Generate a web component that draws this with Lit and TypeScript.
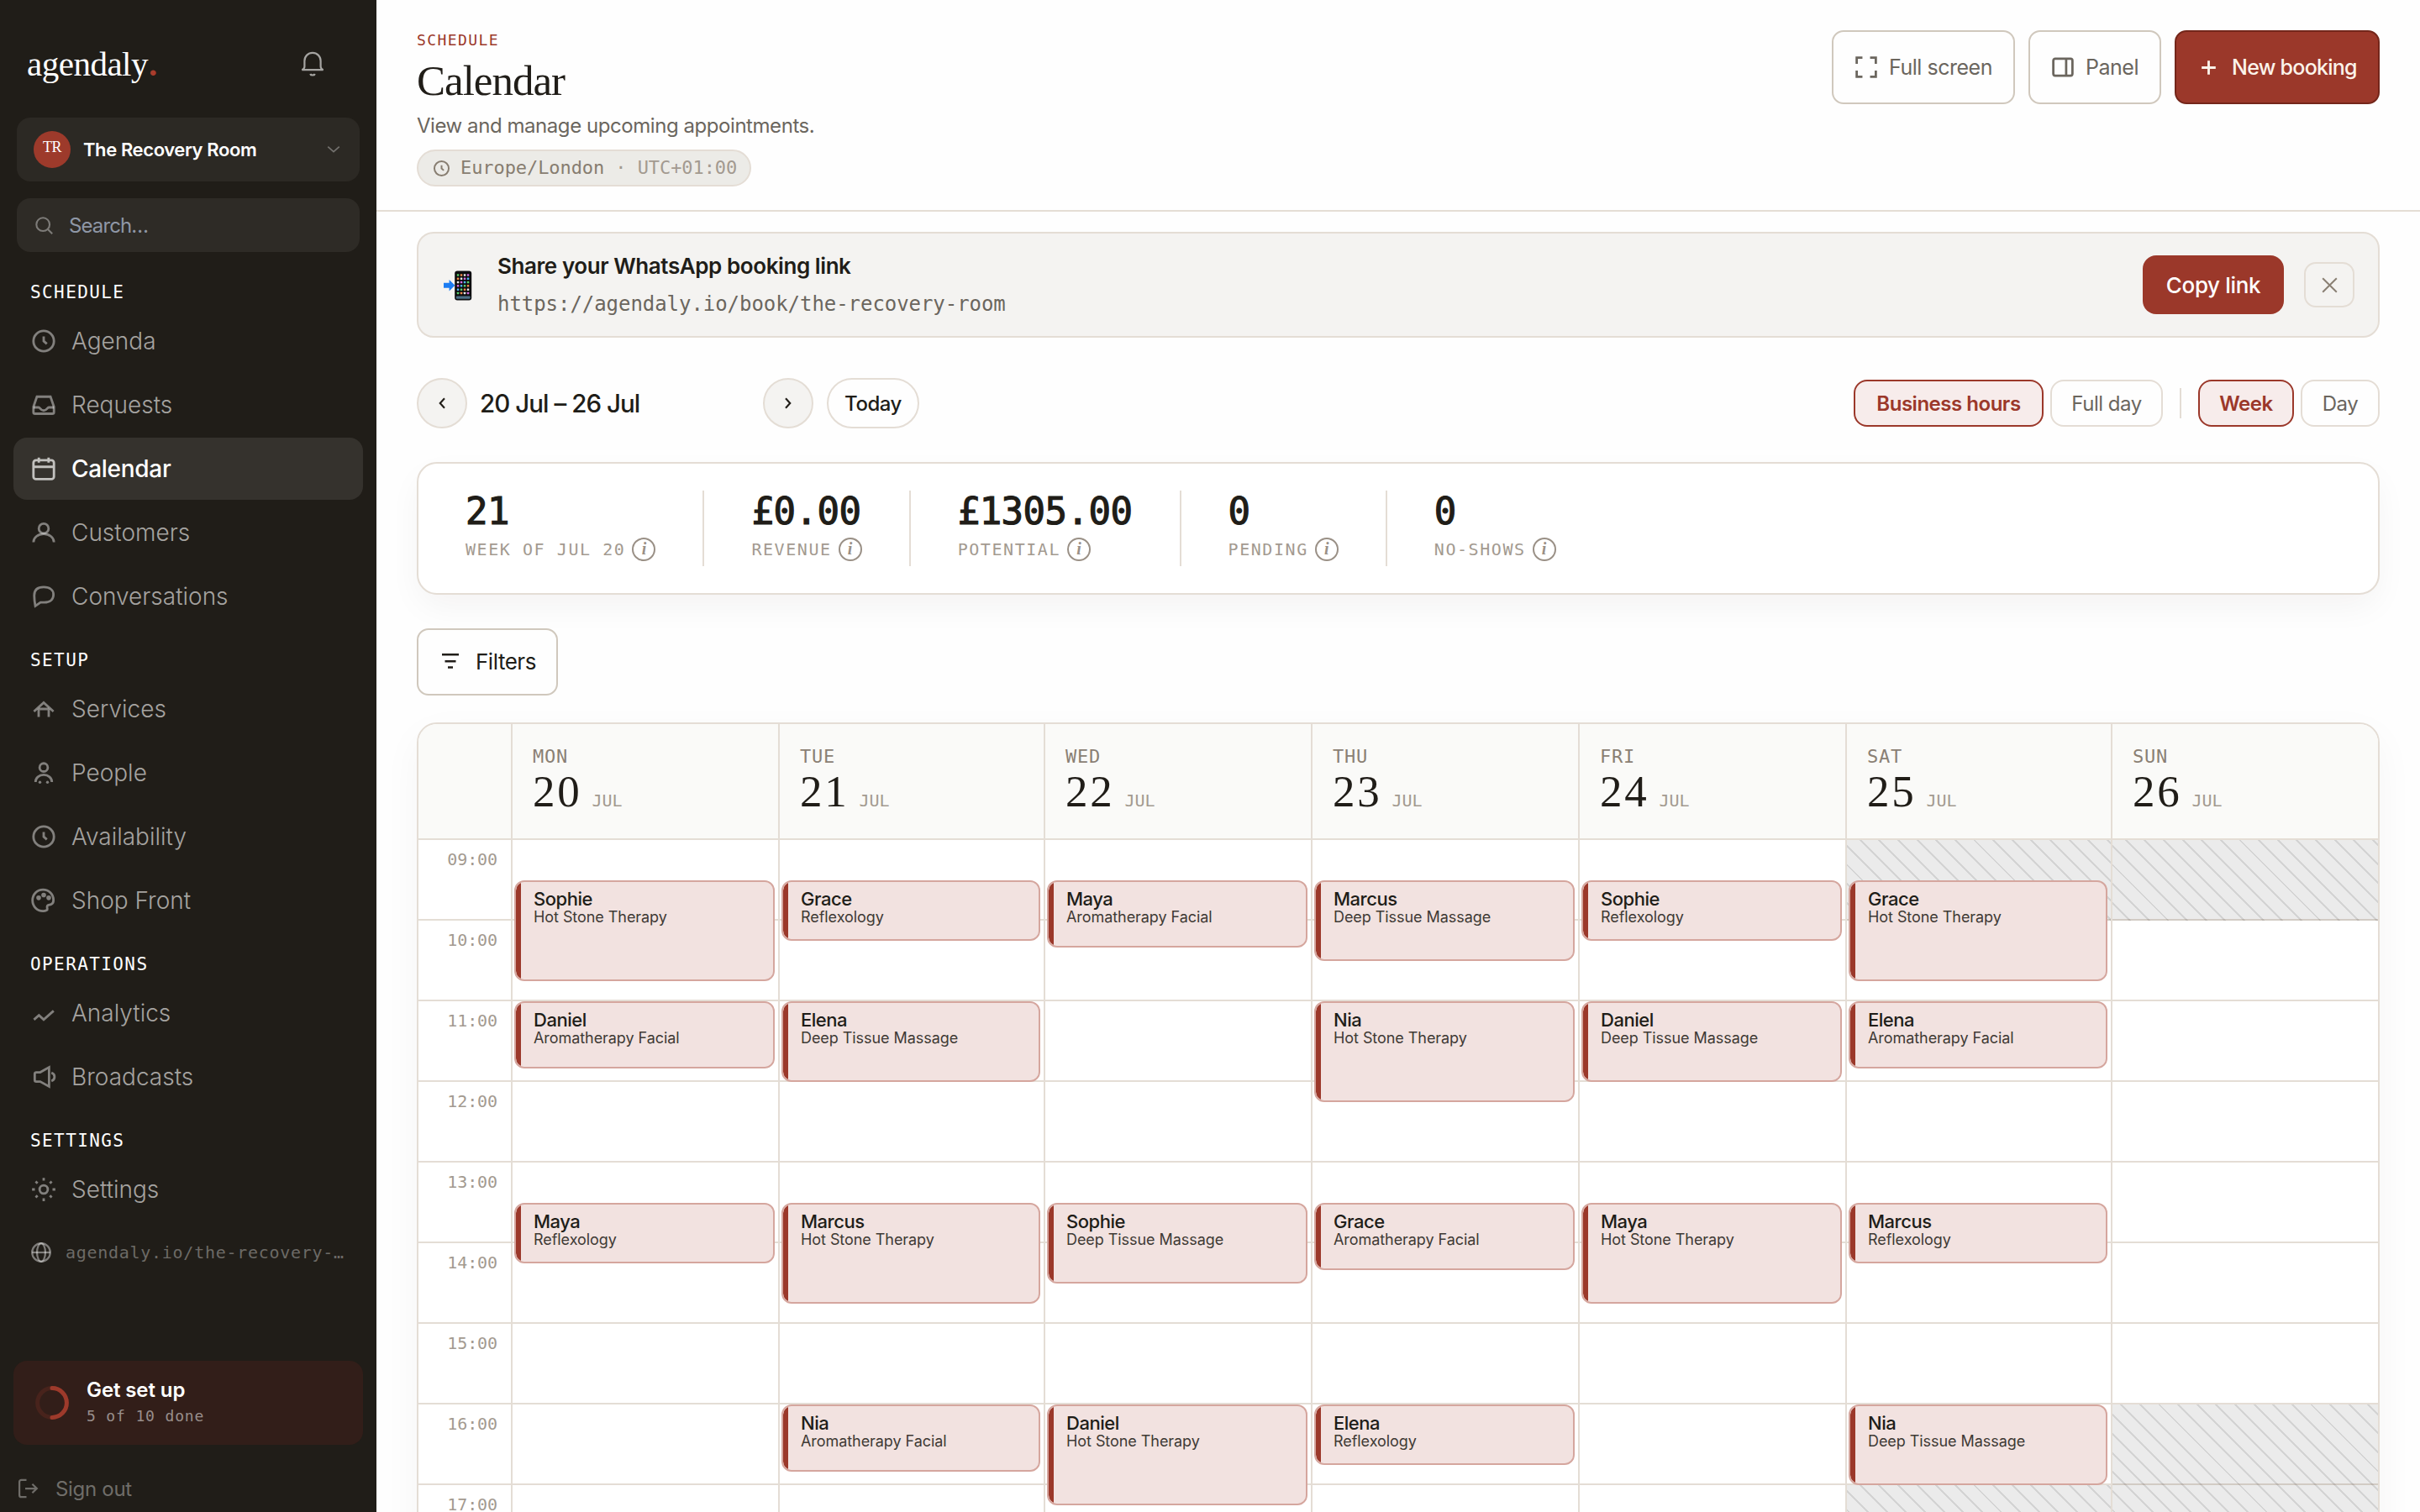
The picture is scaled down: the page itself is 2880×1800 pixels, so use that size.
import { LitElement, css, html, svg } from "lit";
import { customElement, property, state } from "lit/decorators.js";
import { classMap } from "lit/directives/class-map.js";
import { styleMap } from "lit/directives/style-map.js";

const ICONS: Record<string, unknown> = {
  clock: svg`<circle cx="8" cy="8" r="6.5" /><path d="M8 5.1V8l2 1.8" />`,
  inbox: svg`
    <path d="M3.7 2.8h8.6l2.2 6.4v3.4a1 1 0 0 1-1 1h-11a1 1 0 0 1-1-1V9.2z" />
    <path d="M1.5 9.6h3.3c.9 0 1.3 2 3.2 2s2.3-2 3.2-2h3.3" />`,
  calendar: svg`
    <rect x="1.5" y="2.6" width="13" height="12" rx="1.6" />
    <path d="M1.5 6.8h13M4.9 0.9v3.2M11.1 0.9v3.2" />`,
  user: svg`
    <circle cx="8" cy="5.4" r="3.1" />
    <path d="M1.5 14.1c0-2.9 2.9-5.2 6.5-5.2s6.5 2.3 6.5 5.2" />`,
  chat: svg`<path
    d="M2 7.4C2 4 4 2.1 8 2.1s6.2 2 6.2 4.8c0 3-2.2 4.9-5.8 4.9H6l-3.3 2.3c-.4-2.2-.7-4.4-.7-6.7z"
  />`,
  services: svg`
    <path d="M1.8 9.6 8 4l6.2 5.6" />
    <path d="M4.8 13V7.8M11.2 13V7.8M4.8 8h6.4" />`,
  people: svg`
    <circle cx="8" cy="4.6" r="2.6" />
    <path d="M2.8 13.8c0-2.6 2.3-4.5 5.2-4.5s5.2 1.9 5.2 4.5" />
    <circle class="dot" cx="5.6" cy="14" r="0.9" />
    <circle class="dot" cx="10.4" cy="14" r="0.9" />`,
  palette: svg`
    <path
      d="M7.6 1.1C3.8 1.1.9 4 .9 7.9s2.9 6.8 6.7 6.8c1.7 0 2.9-.5 2.7-1.5-.2-.8-.4-1.2.1-1.9.6-.8 1.5-.4 2.4-.9 1-.5 1.4-1.5 1.4-2.7 0-3.7-2.9-6.6-6.6-6.6z"
    />
    <circle class="dot" cx="4.8" cy="6.3" r="1.5" />
    <circle class="dot" cx="8" cy="4.5" r="1.5" />
    <circle class="dot" cx="11.2" cy="6.3" r="1.5" />`,
  trend: svg`<path d="M1.8 12.2 5 9.4l3 2.8 6.3-5.6" />`,
  speaker: svg`
    <path
      d="M11.4 1.9v12.2L5.8 11H3.3a1 1 0 0 1-1-1V6.1a1 1 0 0 1 1-1h2.5z"
    />
    <path d="M12.9 5.4a2.7 2.7 0 0 1 0 5.2" />`,
  gear: svg`
    <circle cx="8" cy="8" r="2.6" />
    <path
      d="M8 .6v1.8M8 13.6v1.8M.6 8h1.8M13.6 8h1.8M2.9 2.9l1.2 1.2M11.9 11.9l1.2 1.2M2.9 13.1l1.2-1.2M11.9 4.1l1.2-1.2"
    />`,
  globe: svg`
    <circle cx="8" cy="8" r="7.2" />
    <path d="M.8 8h14.4" />
    <ellipse cx="8" cy="8" rx="3.3" ry="7.2" />`,
  search: svg`<circle cx="7" cy="7" r="6" /><path d="m11.4 11.4 4 4" />`,
  bell: svg`
    <path d="M3.2 9.6V6.2a4.8 4.8 0 0 1 9.6 0v3.4c0 .9.7 1.6 1.5 2H1.7c.8-.4 1.5-1.1 1.5-2z" />
    <path d="M6.6 14c.4 1 2.4 1 2.8 0" />`,
  chevronDown: svg`<path d="m2 5 6 5.4L14 5" />`,
  chevronLeft: svg`<path d="M10.4 3.4 6.2 8l4.2 4.6" />`,
  chevronRight: svg`<path d="M5.6 3.4 9.8 8l-4.2 4.6" />`,
  logout: svg`
    <path d="M7 1.2H2.9a1.5 1.5 0 0 0-1.5 1.5v10.6a1.5 1.5 0 0 0 1.5 1.5H7" />
    <path d="M6 8h9M11.6 4.5 15.2 8l-3.6 3.5" />`,
  fullscreen: svg`<path
    d="M1 5.6V1h4.2M10.8 1H15v4.6M15 10.4V15h-4.2M5.2 15H1v-4.6"
  />`,
  panel: svg`
    <rect x="1" y="1.8" width="14" height="12.4" rx="1.4" />
    <path d="M10.4 1.8v12.4" />`,
  plus: svg`<path d="M8 1v14M1 8h14" />`,
  close: svg`<path d="m1 1 14 14M15 1 1 15" />`,
  filter: svg`<path d="M0 1.8h16M2.8 8.2h10.4M5.6 14h4.8" />`,
};

@customElement("ui-icon")
export class UiIcon extends LitElement {
  @property({ type: String })
  name: string = "";

  render() {
    return html`<svg viewBox="0 0 16 16">${ICONS[this.name]}</svg>`;
  }

  static styles = css`
    :host {
      display: block;
      flex: none;
      width: 30px;
      height: 30px;
    }
    svg {
      display: block;
      width: 100%;
      height: 100%;
      overflow: visible;
      fill: none;
      stroke: currentColor;
      stroke-width: var(--stroke, 1.5);
    }
    .dot {
      fill: currentColor;
      stroke: none;
    }
  `;
}

const SECTIONS = [
  {
    title: "Schedule",
    items: [
      ["clock", "Agenda"],
      ["inbox", "Requests"],
      ["calendar", "Calendar"],
      ["user", "Customers"],
      ["chat", "Conversations"],
    ],
  },
  {
    title: "Setup",
    items: [
      ["services", "Services"],
      ["people", "People"],
      ["clock", "Availability"],
      ["palette", "Shop Front"],
    ],
  },
  {
    title: "Operations",
    items: [
      ["trend", "Analytics"],
      ["speaker", "Broadcasts"],
    ],
  },
  { title: "Settings", items: [["gear", "Settings"]] },
];

@customElement("side-bar")
export class SideBar extends LitElement {
  @property({ type: String })
  active: string = "Calendar";

  render() {
    return html`
      <div class="brand">
        <span class="logo">agendaly<i>.</i></span>
        <ui-icon class="bell" name="bell"></ui-icon>
      </div>
      <div class="org">
        <span class="avatar">TR</span>
        <span class="org-name">The Recovery Room</span>
        <ui-icon class="chevron" name="chevronDown"></ui-icon>
      </div>
      <div class="search">
        <ui-icon class="search-icon" name="search"></ui-icon>
        <span>Search…</span>
      </div>
      <nav>
        ${SECTIONS.map(
          (s) => html`
            <div class="section">${s.title}</div>
            ${s.items.map(
              ([icon, label]) => html`
                <a class=${classMap({ item: true, on: label === this.active })}>
                  <ui-icon name=${icon}></ui-icon>
                  <span>${label}</span>
                </a>
              `
            )}
          `
        )}
        <div class="site">
          <ui-icon class="globe" name="globe"></ui-icon>
          <span>agendaly.io/the-recovery-…</span>
        </div>
      </nav>
      <div class="setup">
        <svg class="ring" viewBox="0 0 40 40">
          <circle class="track" cx="20" cy="20" r="17.4" />
          <path class="done" d="M20 2.6a17.4 17.4 0 0 1 0 34.8" />
        </svg>
        <div>
          <div class="setup-title">Get set up</div>
          <div class="setup-sub">5 of 10 done</div>
        </div>
      </div>
      <div class="signout">
        <ui-icon class="logout" name="logout"></ui-icon>
        <span>Sign out</span>
      </div>
    `;
  }

  static styles = css`
    :host {
      box-sizing: border-box;
      display: flex;
      flex-direction: column;
      flex: none;
      width: 448px;
      height: 1800px;
      padding: 44px 16px 0;
      background: #201d18;
      color: #fff;
    }
    .brand {
      display: flex;
      align-items: center;
      justify-content: space-between;
      height: 64px;
      margin-bottom: 32px;
      padding: 0 44px 0 16px;
    }
    .logo {
      font: 41px/60px "Liberation Serif", serif;
      letter-spacing: -0.5px;
    }
    .logo i {
      margin-left: 1px;
      color: #a83c2c;
      font-style: normal;
      font-weight: 700;
    }
    .bell {
      --stroke: 1.1;
      width: 32px;
      height: 32px;
      color: #a5a4a1;
    }
    .org {
      display: flex;
      align-items: center;
      height: 76px;
      margin: 0 4px 20px;
      padding: 0 22px 0 20px;
      box-sizing: border-box;
      border-radius: 16px;
      background: #2c2924;
    }
    .avatar {
      width: 44px;
      height: 44px;
      border-radius: 50%;
      background: #9d3a2b;
      font: 18px/38px "Liberation Serif", serif;
      text-align: center;
    }
    .org-name {
      flex: 1;
      margin-left: 15px;
      font-size: 22px;
      font-weight: 600;
      letter-spacing: -0.4px;
    }
    .chevron {
      width: 18px;
      height: 18px;
      color: #73716e;
    }
    .search {
      display: flex;
      align-items: center;
      height: 64px;
      margin: 0 4px 9px;
      padding-left: 22px;
      box-sizing: border-box;
      border-radius: 16px;
      background: #2e2b26;
      color: #8f97a6;
      font-size: 24px;
      letter-spacing: -0.9px;
    }
    .search-icon {
      --stroke: 1.6;
      width: 21px;
      height: 21px;
      margin-right: 19px;
      color: #7d7b78;
    }
    .section {
      height: 60px;
      box-sizing: border-box;
      padding: 29px 0 0 20px;
      font: 21px/21px "DejaVu Sans Mono", monospace;
      letter-spacing: 1.4px;
      text-transform: uppercase;
    }
    .item {
      display: flex;
      align-items: center;
      gap: 18px;
      height: 74px;
      padding-left: 21px;
      border-radius: 16px;
      color: #a5a3a0;
      font-size: 28px;
      font-weight: 300;
      letter-spacing: 0;
    }
    .item + .item {
      margin-top: 2px;
    }
    .item ui-icon {
      color: rgba(255, 255, 255, 0.44);
    }
    .item.on {
      background: #35322d;
      color: #fff;
      font-weight: 500;
      letter-spacing: -0.3px;
    }
    .item.on ui-icon {
      color: #c2c1be;
    }
    .site {
      display: flex;
      align-items: center;
      gap: 17px;
      height: 76px;
      padding-left: 21px;
      color: #6c6a66;
      font: 20px/24px "DejaVu Sans Mono", monospace;
      letter-spacing: 0.72px;
      white-space: nowrap;
    }
    .globe {
      width: 24px;
      height: 24px;
      color: rgba(255, 255, 255, 0.42);
    }
    .setup {
      display: flex;
      align-items: center;
      gap: 21px;
      height: 100px;
      box-sizing: border-box;
      margin-top: auto;
      padding-left: 26px;
      border-radius: 16px;
      background: #321e19;
    }
    .ring {
      width: 40px;
      height: 40px;
      fill: none;
      stroke-width: 5;
    }
    .track {
      stroke: #48231c;
    }
    .done {
      stroke: #9d3a2b;
      stroke-linecap: round;
    }
    .setup-title {
      font-size: 24px;
      line-height: 32px;
      font-weight: 600;
      letter-spacing: -0.1px;
    }
    .setup-sub {
      color: #988e8b;
      font: 18px/30px "DejaVu Sans Mono", monospace;
      letter-spacing: 0.85px;
    }
    .signout {
      display: flex;
      align-items: center;
      gap: 21px;
      height: 80px;
      padding: 24px 0 0 5px;
      box-sizing: border-box;
      color: #6f6d69;
      font-size: 24px;
      letter-spacing: -0.3px;
    }
    .logout {
      width: 24px;
      height: 24px;
    }
  `;
}

interface Booking {
  name: string;
  service: string;
  start: number;
}

interface Day {
  dow: string;
  date: number;
  bookings: Booking[];
  closed: [number, number][];
}

const FIRST_HOUR = 9;
const LAST_HOUR = 18;
const HOUR = 96;

// minutes per service
const DURATION: Record<string, number> = {
  "Hot Stone Therapy": 75,
  "Deep Tissue Massage": 60,
  "Aromatherapy Facial": 50,
  Reflexology: 45,
};

const HOT = "Hot Stone Therapy";
const DEEP = "Deep Tissue Massage";
const AROMA = "Aromatherapy Facial";
const REFLEX = "Reflexology";

const b = (start: number, name: string, service: string): Booking => ({
  start,
  name,
  service,
});

const DAYS: Day[] = [
  {
    dow: "Mon",
    date: 20,
    bookings: [
      b(9.5, "Sophie", HOT),
      b(11, "Daniel", AROMA),
      b(13.5, "Maya", REFLEX),
    ],
    closed: [],
  },
  {
    dow: "Tue",
    date: 21,
    bookings: [
      b(9.5, "Grace", REFLEX),
      b(11, "Elena", DEEP),
      b(13.5, "Marcus", HOT),
      b(16, "Nia", AROMA),
    ],
    closed: [],
  },
  {
    dow: "Wed",
    date: 22,
    bookings: [
      b(9.5, "Maya", AROMA),
      b(13.5, "Sophie", DEEP),
      b(16, "Daniel", HOT),
    ],
    closed: [],
  },
  {
    dow: "Thu",
    date: 23,
    bookings: [
      b(9.5, "Marcus", DEEP),
      b(11, "Nia", HOT),
      b(13.5, "Grace", AROMA),
      b(16, "Elena", REFLEX),
    ],
    closed: [],
  },
  {
    dow: "Fri",
    date: 24,
    bookings: [
      b(9.5, "Sophie", REFLEX),
      b(11, "Daniel", DEEP),
      b(13.5, "Maya", HOT),
    ],
    closed: [],
  },
  {
    dow: "Sat",
    date: 25,
    bookings: [
      b(9.5, "Grace", HOT),
      b(11, "Elena", AROMA),
      b(13.5, "Marcus", REFLEX),
      b(16, "Nia", DEEP),
    ],
    closed: [
      [9, 10],
      [17, 18],
    ],
  },
  {
    dow: "Sun",
    date: 26,
    bookings: [],
    closed: [
      [9, 10],
      [16, 18],
    ],
  },
];

@customElement("week-grid")
export class WeekGrid extends LitElement {
  private span(from: number, hours: number) {
    return styleMap({
      top: `${(from - FIRST_HOUR) * HOUR}px`,
      height: `${hours * HOUR}px`,
    });
  }

  render() {
    const hours = Array.from(
      { length: LAST_HOUR - FIRST_HOUR },
      (_, i) => FIRST_HOUR + i
    );
    return html`
      <div class="row head">
        <div></div>
        ${DAYS.map(
          (d) => html`
            <div class="day-head">
              <div class="dow">${d.dow}</div>
              <div class="date">
                <span class="num">${d.date}</span>
                <span class="month">Jul</span>
              </div>
            </div>
          `
        )}
      </div>
      <div class="row">
        <div>
          ${hours.map(
            (h) => html`
              <div class="slot time">${String(h).padStart(2, "0")}:00</div>
            `
          )}
        </div>
        ${DAYS.map(
          (d) => html`
            <div class="day">
              ${hours.map(() => html`<div class="slot"></div>`)}
              ${d.closed.map(
                ([from, to]) => html`
                  <div class="closed" style=${this.span(from, to - from)}></div>
                `
              )}
              ${d.bookings.map(
                (e) => html`
                  <div
                    class="booking"
                    style=${this.span(e.start, DURATION[e.service] / 60)}
                  >
                    <div class="name">${e.name}</div>
                    <div class="service">${e.service}</div>
                  </div>
                `
              )}
            </div>
          `
        )}
      </div>
    `;
  }

  static styles = css`
    :host {
      display: block;
      border: 2px solid #e4ddd5;
      border-radius: 24px;
      background: #fff;
      overflow: hidden;
      box-shadow: 0 16px 48px rgba(32, 29, 24, 0.04);
    }
    .row {
      display: grid;
      grid-template-columns: 110px 318px 316px 318px 318px 318px 316px 318px;
    }
    .head {
      height: 136px;
      border-bottom: 2px solid #e4ddd5;
      background: #fafaf8;
    }
    .day-head {
      border-left: 2px solid #e4ddd5;
      padding: 27px 0 0 24px;
    }
    .dow {
      color: #8a8074;
      font: 22px/24px "DejaVu Sans Mono", monospace;
      letter-spacing: 0.8px;
      text-transform: uppercase;
    }
    .date {
      display: flex;
      align-items: baseline;
      gap: 12px;
      height: 60px;
    }
    .num {
      color: #201d18;
      font: 53px/58px "Liberation Serif", serif;
      letter-spacing: 2.8px;
    }
    .month {
      color: #a39a90;
      font: 20px/24px "DejaVu Sans Mono", monospace;
      letter-spacing: -0.1px;
      text-transform: uppercase;
    }
    .slot {
      height: 96px;
      box-sizing: border-box;
      border-bottom: 2px solid #e4ddd5;
    }
    .time {
      padding: 11px 16px 0 0;
      color: #a39a90;
      font: 20px/24px "DejaVu Sans Mono", monospace;
      letter-spacing: -0.1px;
      text-align: right;
    }
    .day {
      position: relative;
      border-left: 2px solid #e4ddd5;
    }
    .closed {
      position: absolute;
      left: 0;
      right: 0;
      background:
        repeating-linear-gradient(
          45deg,
          transparent 0 14px,
          rgba(0, 0, 0, 0.1) 14px 16px
        ),
        rgba(0, 0, 0, 0.08);
    }
    .booking {
      position: absolute;
      left: 2px;
      right: 4px;
      box-sizing: border-box;
      padding: 8px 0 0 21px;
      border: 2px solid #d5a69e;
      border-radius: 12px;
      background: linear-gradient(to right, #9b382a 6px, #f2e2e0 6px)
        padding-box;
      white-space: nowrap;
    }
    .name {
      color: #201d18;
      font-size: 22px;
      line-height: 24px;
      font-weight: 500;
    }
    .service {
      color: #3f3a35;
      font-size: 18px;
      line-height: 20px;
      letter-spacing: -0.06px;
    }
  `;
}

const STATS = [
  ["21", "Week of Jul 20"],
  ["£0.00", "Revenue"],
  ["£1305.00", "Potential"],
  ["0", "Pending"],
  ["0", "No-shows"],
];

@customElement("app-root")
export class AppRoot extends LitElement {
  @state()
  hours: string = "Business hours";

  @state()
  view: string = "Week";

  private toggle(label: string, size: string, on: boolean) {
    return html`<button class=${classMap({ toggle: true, [size]: true, on })}>
      ${label}
    </button>`;
  }

  private phone() {
    const colors = ["#5bd06a", "#e8e8e8", "#4fb5f5", "#f08a4b", "#d46be0"];
    const cells = Array.from({ length: 24 }, (_, i) => i);
    return html`
      <svg class="phone" viewBox="0 0 36 36">
        <rect x="14.2" y="0.4" width="20" height="35.2" rx="3" fill="#0d0d0f" />
        ${cells.map(
          (i) => svg`<rect
            x=${16.8 + (i % 4) * 4}
            y=${4.2 + Math.floor(i / 4) * 4.3}
            width="2.5" height="2.5" rx="0.6"
            fill=${colors[(i * 3 + Math.floor(i / 4)) % 5]} />`
        )}
        <rect x="15.8" y="30.4" width="16.8" height="3.4" rx="1" fill="#4b6f86" />
        <path d="M1 14.8h6.6V11l6.8 6.8-6.8 6.8v-3.8H1z" fill="#1c7cf2" />
      </svg>
    `;
  }

  render() {
    return html`
      <side-bar></side-bar>
      <main>
        <header>
          <div>
            <div class="eyebrow">Schedule</div>
            <h1>Calendar</h1>
            <p class="sub">View and manage upcoming appointments.</p>
            <div class="zone">
              <ui-icon name="clock"></ui-icon>
              <span>Europe/London <em>· UTC+01:00</em></span>
            </div>
          </div>
          <div class="actions">
            <button class="btn full">
              <ui-icon name="fullscreen"></ui-icon>Full screen
            </button>
            <button class="btn panel">
              <ui-icon name="panel"></ui-icon>Panel
            </button>
            <button class="btn primary">
              <ui-icon name="plus"></ui-icon>New booking
            </button>
          </div>
        </header>
        <div class="body">
          <section class="banner">
            ${this.phone()}
            <div class="share">
              <div class="share-title">Share your WhatsApp booking link</div>
              <div class="share-url">
                https://agendaly.io/book/the-recovery-room
              </div>
            </div>
            <button class="copy">Copy link</button>
            <button class="dismiss"><ui-icon name="close"></ui-icon></button>
          </section>
          <div class="controls">
            <button class="round"><ui-icon name="chevronLeft"></ui-icon></button>
            <span class="range">20 Jul – 26 Jul</span>
            <button class="round"><ui-icon name="chevronRight"></ui-icon></button>
            <button class="today">Today</button>
            <div class="toggles">
              ${this.toggle("Business hours", "xl", this.hours === "Business hours")}
              ${this.toggle("Full day", "lg", this.hours === "Full day")}
              <span class="sep"></span>
              ${this.toggle("Week", "md", this.view === "Week")}
              ${this.toggle("Day", "sm", this.view === "Day")}
            </div>
          </div>
          <section class="stats">
            ${STATS.map(
              ([value, label]) => html`
                <div class="stat">
                  <div class="value">${value}</div>
                  <div class="label">${label}<span class="info">i</span></div>
                </div>
              `
            )}
          </section>
          <button class="filters">
            <ui-icon name="filter"></ui-icon>Filters
          </button>
          <week-grid></week-grid>
        </div>
      </main>
    `;
  }

  static styles = css`
    :host {
      display: flex;
      width: 2880px;
      height: 1800px;
      overflow: hidden;
      background: #fefefe;
      color: #201d18;
      font-family: Inter, "Liberation Sans", sans-serif;
      font-size: 24px;
      letter-spacing: -0.02em;
    }
    main {
      flex: 1;
      min-width: 0;
    }
    button {
      box-sizing: border-box;
      display: flex;
      align-items: center;
      flex: none;
      margin: 0;
      padding: 0;
      border: 2px solid #e4ddd5;
      background: transparent;
      color: inherit;
      font: inherit;
      letter-spacing: inherit;
      white-space: nowrap;
    }
    header {
      display: flex;
      justify-content: space-between;
      align-items: flex-start;
      padding: 37px 48px 28px;
      border-bottom: 2px solid #e4ddd5;
    }
    .eyebrow {
      color: #9b382a;
      font: 18px/22px "DejaVu Sans Mono", monospace;
      letter-spacing: 1.4px;
      text-transform: uppercase;
    }
    h1 {
      margin: 0;
      font: 51px/74px "Liberation Serif", serif;
      letter-spacing: -1px;
    }
    .sub {
      margin: 0 0 11px;
      color: #6b665e;
      line-height: 34px;
      letter-spacing: -0.44px;
    }
    .zone {
      box-sizing: border-box;
      display: flex;
      align-items: center;
      gap: 12px;
      width: 398px;
      height: 44px;
      padding-left: 17px;
      border: 2px solid #e4ddd5;
      border-radius: 22px;
      background: #ecebe7;
      color: #877d70;
      font: 22px/28px "DejaVu Sans Mono", monospace;
      letter-spacing: -0.08px;
      white-space: nowrap;
    }
    .zone ui-icon {
      width: 21px;
      height: 21px;
    }
    .zone em {
      color: #a39a90;
      font-style: normal;
    }
    .actions {
      display: flex;
      gap: 16px;
      margin-top: -1px;
    }
    .btn {
      height: 88px;
      border-color: #d0c8bd;
      border-radius: 14px;
      padding-left: 26px;
      gap: 14px;
      color: #6b665e;
      font-size: 25px;
    }
    .btn ui-icon {
      width: 26px;
      height: 26px;
      --stroke: 1.7;
    }
    .full {
      width: 218px;
    }
    .panel {
      width: 158px;
    }
    .primary {
      width: 244px;
      padding-left: 29px;
      gap: 18px;
      border-color: #74261a;
      background: #9b382a;
      color: #fbf3ea;
      font-weight: 500;
      letter-spacing: -0.75px;
    }
    .primary ui-icon {
      width: 19px;
      height: 19px;
      --stroke: 2.4;
    }
    .body {
      padding: 24px 48px 0;
    }
    .banner {
      box-sizing: border-box;
      display: flex;
      align-items: center;
      height: 126px;
      padding: 0 28px 0 29px;
      border: 2px solid #e4ddd5;
      border-radius: 20px;
      background: #f4f3f1;
    }
    .phone {
      width: 36px;
      height: 36px;
      margin: 2px 29px 0 0;
    }
    .share {
      flex: 1;
    }
    .share-title {
      font-size: 26px;
      line-height: 46px;
      font-weight: 600;
      letter-spacing: -0.42px;
    }
    .share-url {
      color: #6b665e;
      font: 24px/44px "DejaVu Sans Mono", monospace;
      letter-spacing: -0.05px;
    }
    .copy {
      justify-content: center;
      width: 168px;
      height: 70px;
      margin-right: 24px;
      border: 0;
      border-radius: 16px;
      background: #9b382a;
      color: #fff;
      font-size: 26px;
      font-weight: 500;
      letter-spacing: -0.35px;
    }
    .dismiss {
      justify-content: center;
      width: 60px;
      height: 54px;
      border-radius: 14px;
      color: #8a8074;
    }
    .dismiss ui-icon {
      width: 19px;
      height: 19px;
      --stroke: 1.7;
    }
    .controls {
      display: flex;
      align-items: center;
      height: 60px;
      margin: 48px 0 40px;
    }
    .round {
      justify-content: center;
      width: 60px;
      height: 60px;
      border-radius: 50%;
      background: #f4f3f1;
    }
    .round ui-icon {
      width: 20px;
      height: 20px;
      --stroke: 1.7;
    }
    .range {
      width: 337px;
      padding-left: 15px;
      font-size: 29.5px;
      font-weight: 500;
      letter-spacing: -0.95px;
    }
    .today {
      justify-content: center;
      width: 110px;
      height: 60px;
      margin-left: 16px;
      border-radius: 30px;
      font-weight: 500;
    }
    .toggles {
      display: flex;
      align-items: center;
      gap: 8px;
      margin-left: auto;
    }
    .toggle {
      justify-content: center;
      height: 56px;
      border-radius: 16px;
      color: #6b665e;
    }
    .toggle.on {
      border-color: #9b382a;
      background: #f7eceb;
      color: #9b382a;
      font-weight: 600;
    }
    .xl {
      width: 226px;
    }
    .lg {
      width: 134px;
    }
    .md {
      width: 114px;
    }
    .sm {
      width: 94px;
    }
    .sep {
      width: 2px;
      height: 36px;
      margin: 0 12px;
      background: #e4ddd5;
    }
    .stats {
      box-sizing: border-box;
      display: flex;
      height: 158px;
      margin-bottom: 40px;
      padding: 32px 0;
      border: 2px solid #e4ddd5;
      border-radius: 24px;
      background: #fff;
      box-shadow: 0 16px 40px -4px rgba(32, 29, 24, 0.05);
    }
    .stat {
      padding: 0 56px;
    }
    .stat + .stat {
      border-left: 2px solid #e4ddd5;
    }
    .value {
      font: 44px/50px "DejaVu Sans Mono", monospace;
      letter-spacing: -0.5px;
      -webkit-text-stroke: 1.2px currentColor;
    }
    .label {
      display: flex;
      align-items: center;
      height: 40px;
      color: #a39a90;
      font: 20px/24px "DejaVu Sans Mono", monospace;
      letter-spacing: 1.56px;
      text-transform: uppercase;
    }
    .info {
      box-sizing: border-box;
      width: 28px;
      height: 28px;
      margin-left: 8px;
      border: 2px solid currentColor;
      border-radius: 50%;
      color: #9a9086;
      font: italic bold 20px/23px "Liberation Serif", serif;
      letter-spacing: 0;
      text-align: center;
      text-transform: none;
    }
    .filters {
      width: 168px;
      height: 80px;
      margin-bottom: 32px;
      padding: 0 0 2px 28px;
      gap: 20px;
      border-color: #d0c8bd;
      border-radius: 14px;
      font-size: 26px;
    }
    .filters ui-icon {
      width: 20px;
      height: 20px;
      --stroke: 1.9;
    }
  `;
}

declare global {
  interface HTMLElementTagNameMap {
    "app-root": AppRoot;
    "side-bar": SideBar;
    "week-grid": WeekGrid;
    "ui-icon": UiIcon;
  }
}
